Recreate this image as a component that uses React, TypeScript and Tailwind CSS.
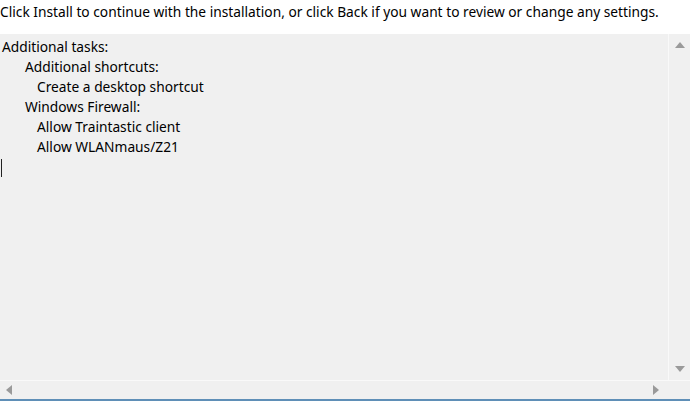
const lines: { text: string; indent: string }[] = [
  { text: "Additional tasks:", indent: "pl-[2px]" },
  { text: "Additional shortcuts:", indent: "pl-[25px]" },
  { text: "Create a desktop shortcut", indent: "pl-[37px]" },
  { text: "Windows Firewall:", indent: "pl-[25px]" },
  { text: "Allow Traintastic client", indent: "pl-[37px]" },
  { text: "Allow WLANmaus/Z21", indent: "pl-[37px]" },
];

function Arrow({ dir }: { dir: "up" | "down" | "left" | "right" }) {
  const points = {
    up: "0,8 5,2 10,8",
    down: "0,2 5,8 10,2",
    left: "8,0 2,5 8,10",
    right: "2,0 8,5 2,10",
  }[dir];
  return (
    <svg width="10" height="10" viewBox="0 0 10 10">
      <polygon points={points} fill="#9a9a9a" />
    </svg>
  );
}

export default function App() {
  return (
    <div
      className="w-[690px] h-[412px] bg-white text-black overflow-hidden flex flex-col"
      style={{ fontFamily: '"Noto Sans", "Open Sans", sans-serif' }}
    >
      <p className="h-[34px] pt-[2px] text-[13.75px] leading-[20px] whitespace-nowrap">
        Click Install to continue with the installation, or click Back if you want to review or change any settings.
      </p>
      <div className="h-[367px] flex flex-col bg-[#f0f0f0] border-b-2 border-[#5f8fb7]">
        <div className="flex-1 flex min-h-0">
          <div className="flex-1 pt-[3px] text-[13.75px] leading-[20px] border-r border-[#f9f9f9]">
            {lines.map((l) => (
              <div key={l.text} className={l.indent}>
                {l.text}
              </div>
            ))}
            <div className="ml-[1px] mt-[2px] w-px h-[18px] bg-[#222]" />
          </div>
          <div className="w-[21px] flex flex-col items-center justify-between py-[6px]">
            <Arrow dir="up" />
            <Arrow dir="down" />
          </div>
        </div>
        <div className="h-[19px] flex items-center justify-between border-t border-[#f9f9f9] pl-[4px] pr-[29px]">
          <Arrow dir="left" />
          <Arrow dir="right" />
        </div>
      </div>
    </div>
  );
}
